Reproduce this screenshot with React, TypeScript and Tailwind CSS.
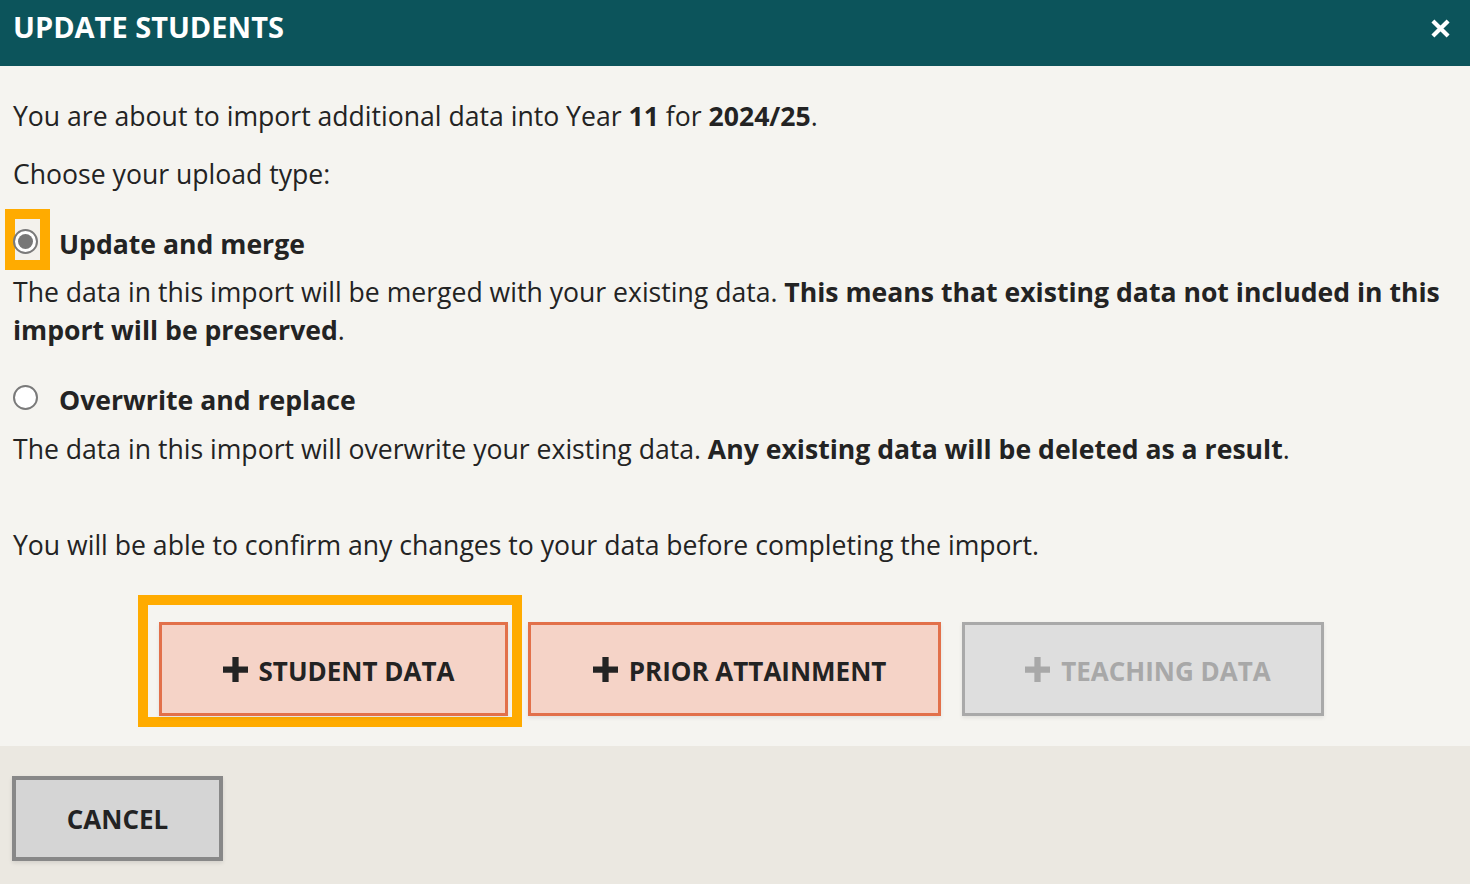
import React, { useState } from 'react';

type Mode = 'merge' | 'overwrite';

function Radio({ checked, focused }: { checked: boolean; focused?: boolean }) {
  return (
    <span className="relative flex h-[25px] w-[25px] shrink-0">
      {focused && (
        <span className="absolute left-[-8px] top-[-20px] h-[61px] w-[45px] border-[10px] border-[#ffab00] bg-[#f3f1ec]" />
      )}
      <span className="relative flex h-[25px] w-[25px] items-center justify-center rounded-full border-2 border-[#7a7a7a] bg-white">
        {checked && <span className="h-[15px] w-[15px] rounded-full bg-[#777777]" />}
      </span>
    </span>
  );
}

function Plus({ className }: { className?: string }) {
  return (
    <svg viewBox="0 0 24 24" className={className} fill="currentColor">
      <path d="M9 0h6v9h9v6h-9v9H9v-9H0V9h9z" />
    </svg>
  );
}

export default function App() {
  const [mode, setMode] = useState<Mode>('merge');

  return (
    <div className="flex h-[884px] w-[1470px] flex-col overflow-hidden bg-[#f5f4f0] text-[#232323] [font-family:'Open_Sans',sans-serif]">
      <div className="flex h-[66px] shrink-0 items-start justify-between bg-[#0c545b] pl-[13px] pr-[20px] pt-[12px]">
        <h1 className="text-[29px] font-bold leading-[30px] text-white">UPDATE STUDENTS</h1>
        <button className="mt-[7px] text-white">
          <svg viewBox="0 0 20 20" className="h-[19px] w-[19px]" stroke="currentColor" strokeWidth="4.4" strokeLinecap="butt">
            <path d="M2 2L18 18M18 2L2 18" />
          </svg>
        </button>
      </div>

      <div className="px-[13px] pb-[30px] pt-[31px] text-[26.6px] leading-[38px]">
        <p>
          You are about to import additional data into Year <b>11</b> for <b>2024/25</b>.
        </p>
        <p className="mt-[20px]">Choose your upload type:</p>

        <label className="mt-[32px] flex items-center gap-[21px]" onClick={() => setMode('merge')}>
          <span className="-mt-[6px]">
            <Radio checked={mode === 'merge'} focused />
          </span>
          <span className="font-bold">Update and merge</span>
        </label>
        <p className="mt-[10px]">
          The data in this import will be merged with your existing data.{' '}
          <b>This means that existing data not included in this import will be preserved</b>.
        </p>

        <label className="mt-[32px] flex items-center gap-[21px]" onClick={() => setMode('overwrite')}>
          <span className="-mt-[6px]">
            <Radio checked={mode === 'overwrite'} />
          </span>
          <span className="font-bold">Overwrite and replace</span>
        </label>
        <p className="mt-[11px]">
          The data in this import will overwrite your existing data.{' '}
          <b>Any existing data will be deleted as a result</b>.
        </p>

        <p className="mt-[58px]">You will be able to confirm any changes to your data before completing the import.</p>

        <div className="mt-[58px] flex gap-[20px] pl-[146px] text-[26px]">
          <div className="relative">
            <span className="absolute bottom-[-11px] left-[-21px] right-[-14px] top-[-27px] border-[10px] border-[#ffab00]" />
            <button className="relative flex h-[94px] w-[349px] items-center justify-center gap-[11px] border-[3px] border-[#e2704a] bg-[#f5d3c7] pl-[10px] pt-[4px] font-bold shadow-[0_2px_4px_rgba(0,0,0,0.08)]">
              <Plus className="-mt-[4px] h-[25px] w-[25px]" />
              STUDENT DATA
            </button>
          </div>
          <button className="flex h-[94px] w-[413px] items-center justify-center gap-[11px] border-[3px] border-[#e2704a] bg-[#f5d3c7] pl-[10px] pt-[4px] font-bold shadow-[0_2px_4px_rgba(0,0,0,0.08)]">
            <Plus className="-mt-[4px] h-[25px] w-[25px]" />
            PRIOR ATTAINMENT
          </button>
          <button disabled className="ml-[1px] flex h-[94px] w-[362px] items-center justify-center gap-[11px] border-[3px] border-[#a9a9a9] bg-[#dedede] pl-[10px] pt-[4px] font-bold text-[#a8a8a8] shadow-[0_2px_4px_rgba(0,0,0,0.08)]">
            <Plus className="-mt-[4px] h-[25px] w-[25px]" />
            TEACHING DATA
          </button>
        </div>
      </div>

      <div className="flex-1 bg-[#ebe8e1] px-[12px] pt-[30px]">
        <button className="flex h-[85px] w-[211px] items-center justify-center border-4 border-[#888888] bg-[#d5d5d5] pt-[2px] text-[26px] font-bold shadow-[0_2px_4px_rgba(0,0,0,0.1)]">
          CANCEL
        </button>
      </div>
    </div>
  );
}
